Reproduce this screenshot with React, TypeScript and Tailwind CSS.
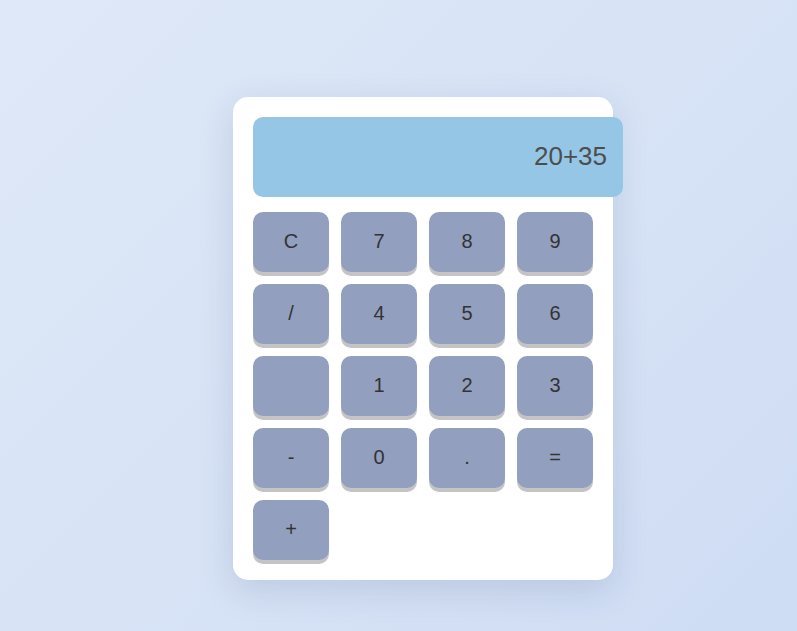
const keys = ["C", "7", "8", "9", "/", "4", "5", "6", "", "1", "2", "3", "-", "0", ".", "=", "+"];

export default function App() {
  return (
    <div className="min-h-[631px] w-full bg-[linear-gradient(135deg,#dee8f8_0%,#d6e2f5_60%,#cedcf4_100%)] pl-[233px] pt-[97px] font-['Liberation_Sans',Arial,sans-serif]">
      <div className="w-[380px] rounded-[15px] bg-white p-5 shadow-[0_10px_35px_rgba(40,60,110,0.15)]">
        <div className="mb-[15px] flex h-20 w-[370px] items-center justify-end rounded-[10px] bg-[#95c6e6] pb-[2px] pr-4 text-[26px] text-[#4d4d4d]">
          20+35
        </div>
        <div className="grid grid-cols-[repeat(4,76px)] gap-3">
          {keys.map((k, i) => (
            <button
              key={i}
              className="flex h-[60px] w-[76px] items-center justify-center rounded-[10px] bg-[#929fbf] pb-[2px] text-xl text-[#333] shadow-[0_4px_0_#c4c4c4]"
            >
              {k}
            </button>
          ))}
        </div>
      </div>
    </div>
  );
}
